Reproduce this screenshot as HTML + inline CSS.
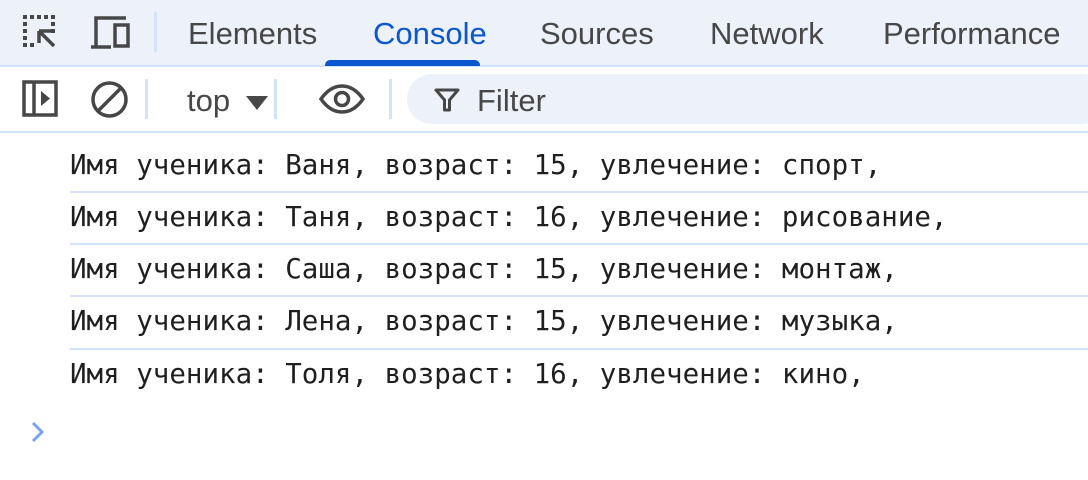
<!DOCTYPE html><html><head><meta charset="utf-8"><style>
body{margin:0;width:1088px;height:480px;background:#fff;position:relative;overflow:hidden;font-family:"Liberation Sans",sans-serif;}
.top{position:absolute;left:0;top:0;width:1088px;height:65px;background:#edf2fa;border-bottom:2px solid #d3e3fd;}
.tb{position:absolute;left:0;top:67px;width:1088px;height:64px;background:#fff;border-bottom:2px solid #d3e3fd;}
.t{position:absolute;top:16px;font-size:31px;color:#474747;}
.sep{position:absolute;width:3px;background:#d3e3fd;}
.line{position:absolute;left:70px;font-family:"DejaVu Sans Mono",monospace;font-size:27.5px;color:#1f1f1f;white-space:pre;}
.hr{position:absolute;left:70px;right:0;height:2px;background:#d3e3fd;}
</style></head><body>
<div class="top">
<svg style="position:absolute;left:20px;top:13px" width="40" height="38" viewBox="0 0 40 38"><g fill="#474747"><rect x="3" y="2" width="4" height="4"/><rect x="10" y="2" width="4" height="4"/><rect x="17" y="2" width="4" height="4"/><rect x="24" y="2" width="4" height="4"/><rect x="31" y="2" width="4" height="4"/><rect x="3" y="9" width="4" height="4"/><rect x="3" y="16" width="4" height="4"/><rect x="3" y="23" width="4" height="4"/><rect x="3" y="30" width="4" height="4"/><rect x="10" y="30" width="4" height="4"/><rect x="31" y="9" width="4" height="4"/><rect x="31" y="16" width="4" height="4"/></g><path d="M19 18h12M19 18v12M19 18l15 15" stroke="#474747" stroke-width="3.5" fill="none"/></svg>
<svg style="position:absolute;left:88px;top:15px" width="44" height="34" viewBox="0 0 44 34"><path d="M8 32V3h30M3 32h20" stroke="#474747" stroke-width="3.5" fill="none"/><rect x="27" y="10" width="13" height="21" fill="none" stroke="#474747" stroke-width="3.5"/></svg>
<div class="sep" style="left:154px;top:12px;height:40px"></div>
<div class="t" style="left:188px">Elements</div>
<div class="t" style="left:373px;color:#0b57d0">Console</div>
<div style="position:absolute;left:325px;top:60px;width:155px;height:6px;background:#0b57d0;border-radius:5px 5px 0 0"></div>
<div class="t" style="left:540px">Sources</div>
<div class="t" style="left:710px">Network</div>
<div class="t" style="left:883px">Performance</div>
</div>
<div class="tb">
<svg style="position:absolute;left:22px;top:13px" width="36" height="37" viewBox="0 0 36 37"><rect x="2" y="2" width="32" height="33" fill="none" stroke="#474747" stroke-width="3.5"/><path d="M12 2v33" stroke="#474747" stroke-width="3.5"/><path d="M19 11l9 7.5-9 7.5z" fill="#474747"/></svg>
<svg style="position:absolute;left:90px;top:13px" width="39" height="39" viewBox="0 0 39 39"><circle cx="19.5" cy="19.5" r="16.5" fill="none" stroke="#474747" stroke-width="3.5"/><path d="M8 31L31 8" stroke="#474747" stroke-width="3.5"/></svg>
<div class="sep" style="left:145px;top:12px;height:40px"></div>
<div class="t" style="left:187px;top:16px">top</div>
<svg style="position:absolute;left:246px;top:29px" width="22" height="14"><path d="M0 0h22L11 14z" fill="#474747"/></svg>
<div class="sep" style="left:274px;top:12px;height:40px"></div>
<svg style="position:absolute;left:318px;top:17px" width="48" height="30" viewBox="0 0 48 30"><path d="M3 15C10 5 17 2 24 2s14 3 21 13c-7 10-14 13-21 13S10 25 3 15z" fill="none" stroke="#474747" stroke-width="3.5"/><circle cx="24" cy="15" r="6.5" fill="none" stroke="#474747" stroke-width="3.5"/></svg>
<div class="sep" style="left:389px;top:12px;height:40px"></div>
<div style="position:absolute;left:407px;top:7px;width:700px;height:50px;background:#edf2fa;border-radius:25px"></div>
<svg style="position:absolute;left:434px;top:20px" width="26" height="26" viewBox="0 0 26 26"><path d="M2 3h22l-8.5 10v10h-5V13z" fill="none" stroke="#474747" stroke-width="3" stroke-linejoin="round"/></svg>
<div class="t" style="left:477px;top:16px">Filter</div>
</div>
<div class="line" style="top:149px">Имя ученика: Ваня, возраст: 15, увлечение: спорт,</div>
<div class="hr" style="top:191px"></div>
<div class="line" style="top:201px">Имя ученика: Таня, возраст: 16, увлечение: рисование,</div>
<div class="hr" style="top:243px"></div>
<div class="line" style="top:253px">Имя ученика: Саша, возраст: 15, увлечение: монтаж,</div>
<div class="hr" style="top:295px"></div>
<div class="line" style="top:305px">Имя ученика: Лена, возраст: 15, увлечение: музыка,</div>
<div class="hr" style="top:348px"></div>
<div class="line" style="top:358px">Имя ученика: Толя, возраст: 16, увлечение: кино,</div>
<svg style="position:absolute;left:30px;top:421px" width="16" height="22" viewBox="0 0 16 22"><path d="M3 2l9 9-9 9" fill="none" stroke="#7ca2f0" stroke-width="3"/></svg>
</body></html>
